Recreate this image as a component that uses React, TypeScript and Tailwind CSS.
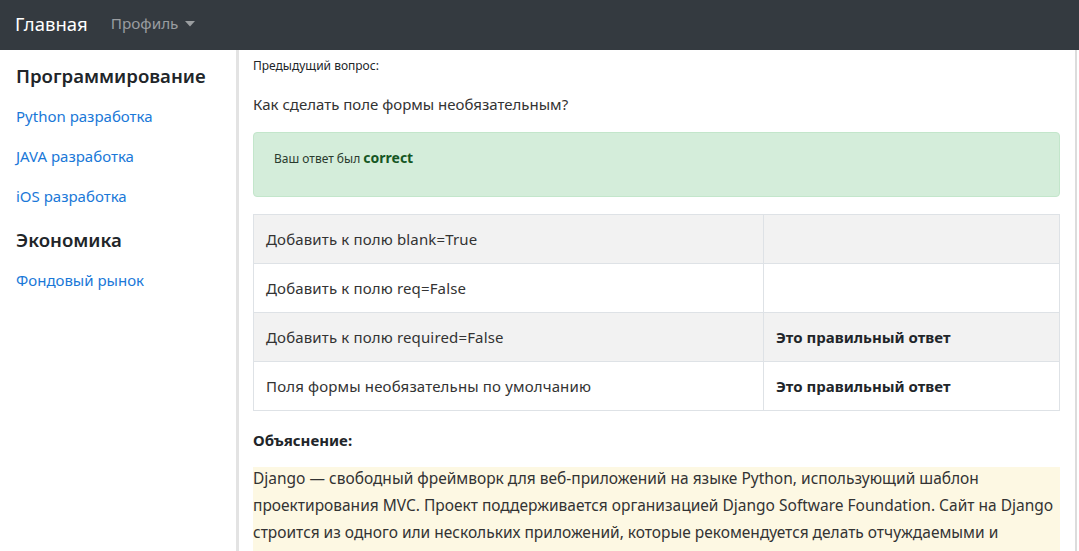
const rows = [
  { text: 'Добавить к полю blank=True', note: '' },
  { text: 'Добавить к полю req=False', note: '' },
  { text: 'Добавить к полю required=False', note: 'Это правильный ответ' },
  { text: 'Поля формы необязательны по умолчанию', note: 'Это правильный ответ' },
];

const App = () => {
  return (
    <div className="h-[551px] overflow-hidden bg-white font-['Noto_Sans',sans-serif] text-[#212529]">
      <nav className="h-[50px] bg-[#343a40] flex items-center px-[15px]">
        <span className="text-white text-[18.5px] leading-none mr-[23px] -mt-[2px]">Главная</span>
        <span className="text-[#9a9da0] text-[15.3px] leading-none flex items-center -mt-[2px]">
          Профиль
          <svg width="10" height="6" viewBox="0 0 10 6" className="ml-[7px] mt-[1px]">
            <path d="M0 0 L10 0 L5 5.5 Z" fill="#9a9da0" />
          </svg>
        </span>
      </nav>

      <div className="flex pr-[2px] h-[501px]">
        <aside className="w-[239px] shrink-0 border-r-[3px] border-[#e3e3e3] pl-[16px] pt-[12px]">
          <h2 className="text-[18.6px] font-semibold leading-[28px] mb-[15px]">Программирование</h2>
          <ul className="text-[15px] text-[#1a78d8]">
            <li className="h-[40px] leading-[22px]">Python разработка</li>
            <li className="h-[40px] leading-[22px]">JAVA разработка</li>
            <li className="h-[41px] leading-[22px]">iOS разработка</li>
          </ul>
          <h2 className="text-[18.6px] font-semibold leading-[28px] mb-[15px]">Экономика</h2>
          <ul className="text-[15px] text-[#1a78d8]">
            <li className="leading-[22px]">Фондовый рынок</li>
          </ul>
        </aside>

        <main className="flex-1 border-r-[2px] border-[#dcdcdc] pl-[14px] pr-[15px] pt-[7px]">
          <p className="text-[12px] leading-[18px]">Предыдущий вопрос:</p>
          <p className="text-[15px] leading-[22px] mt-[18px] text-[#333]">Как сделать поле формы необязательным?</p>

          <div className="mt-[17px] h-[65px] rounded-[4px] border border-[#c3e6cb] bg-[#d4edda] px-[20px] pt-[14px] text-[12px] text-[#2a3b2e]">
            Ваш ответ был{' '}
            <b className="text-[14px] font-bold text-[#155724]">correct</b>
          </div>

          <table className="mt-[17px] w-full border-collapse text-[15px] tracking-[0.15px]">
            <tbody>
              {rows.map((r, i) => (
                <tr key={i} className={i % 2 === 0 ? 'bg-[#f2f2f2]' : 'bg-white'}>
                  <td className="h-[49px] w-[510px] border border-[#dee2e6] px-[12px] pt-[1px] text-[#333]">{r.text}</td>
                  <td className="h-[49px] border border-[#dee2e6] px-[12px] pt-[1px] font-bold tracking-normal">{r.note}</td>
                </tr>
              ))}
            </tbody>
          </table>

          <p className="mt-[18px] text-[15px] font-bold leading-[22px]">Объяснение:</p>

          <div className="mt-[16px] bg-[#fdf8e3] text-[15.5px] leading-[27px] text-[#333] h-[200px]">
            <p className="-translate-y-[2px]">
              Django — свободный фреймворк для веб-приложений на языке Python, использующий шаблон проектирования MVC. Проект поддерживается организацией Django Software Foundation. Сайт на Django строится из одного или нескольких приложений, которые рекомендуется делать отчуждаемыми и подключаемыми.
            </p>
          </div>
        </main>
      </div>
    </div>
  );
};

export default App;
